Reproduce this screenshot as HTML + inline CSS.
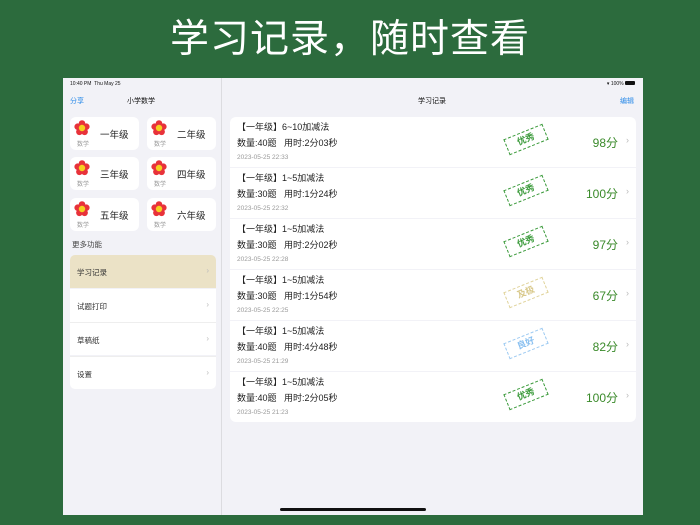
<!DOCTYPE html>
<html><head><meta charset="utf-8"><style>
*{margin:0;padding:0;box-sizing:border-box}
body{width:700px;height:525px;background:#2c6b3d;font-family:"Liberation Sans","Noto Sans CJK SC",sans-serif;position:relative;overflow:hidden}
.abs{position:absolute}
.title{left:0;width:700px;top:15px;text-align:center;color:#fff;font-size:39px;letter-spacing:1px;line-height:50px}
.screen{left:63px;top:78px;width:580px;height:437px;background:#f2f2f7}
.side{left:0;top:0;width:159px;height:437px;border-right:1px solid #dcdce0}
.g{background:#fff;border-radius:6px;width:69px;height:33px}
.g svg{position:absolute;left:4px;top:3px}
.g .n{left:30px;top:10px;font-size:9.5px;color:#222}
.g .s{left:7px;top:22px;font-size:6px;color:#999}
.menu{left:7px;width:146px;height:33px;background:#fff;font-size:7.5px;color:#333;padding:12px 0 0 7px}
.menu .ch{position:absolute;right:7px;top:11px;color:#bbb;font-size:8px}
.card{left:167px;width:406px;height:50px;background:#fff}
.card .l1{left:7px;top:3px;font-size:9px;color:#222}
.card .l2{left:7px;top:19px;font-size:9px;color:#222}
.card .l3{left:7px;top:37px;font-size:6.5px;color:#999}
.card .sc{right:18px;top:17px;font-size:12px;color:#3a8a2a}
.card .ch{right:7px;top:18px;font-size:9px;color:#bbb}
.stamp{left:275px;top:14px;width:42px;height:17px;border:1px dashed;transform:rotate(-22deg);font-size:9px;font-weight:bold;text-align:center;line-height:15px}
</style></head><body>
<svg width="0" height="0" style="position:absolute"><defs><g id="fl"><circle cx="8" cy="3.5" r="3.3" fill="#e8323a"/><circle cx="12.3" cy="6.7" r="3.3" fill="#e8323a"/><circle cx="10.6" cy="11.8" r="3.3" fill="#e8323a"/><circle cx="5.4" cy="11.8" r="3.3" fill="#e8323a"/><circle cx="3.7" cy="6.7" r="3.3" fill="#e8323a"/><circle cx="8" cy="8" r="3.2" fill="#f5d020"/></g></defs></svg>
<div class="abs title">学习记录，随时查看</div>
<div class="abs screen">
 <div class="abs side">
  <div class="abs" style="left:7px;top:3px;font-size:5px;color:#111">10:40 PM&nbsp;&nbsp;Thu May 25</div>
  <div class="abs" style="left:7px;top:18px;font-size:7px;color:#2a8ae8">分享</div>
  <div class="abs" style="left:64px;top:18px;font-size:7px;color:#111">小学数学</div>
  <div class="abs g" style="left:7px;top:39px"><svg width="16" height="16"><use href="#fl"/></svg><span class="abs n">一年级</span><span class="abs s">数学</span></div>
  <div class="abs g" style="left:84px;top:39px"><svg width="16" height="16"><use href="#fl"/></svg><span class="abs n">二年级</span><span class="abs s">数学</span></div>
  <div class="abs g" style="left:7px;top:79px"><svg width="16" height="16"><use href="#fl"/></svg><span class="abs n">三年级</span><span class="abs s">数学</span></div>
  <div class="abs g" style="left:84px;top:79px"><svg width="16" height="16"><use href="#fl"/></svg><span class="abs n">四年级</span><span class="abs s">数学</span></div>
  <div class="abs g" style="left:7px;top:120px"><svg width="16" height="16"><use href="#fl"/></svg><span class="abs n">五年级</span><span class="abs s">数学</span></div>
  <div class="abs g" style="left:84px;top:120px"><svg width="16" height="16"><use href="#fl"/></svg><span class="abs n">六年级</span><span class="abs s">数学</span></div>
  <div class="abs" style="left:9px;top:161px;font-size:7.5px;color:#444">更多功能</div>
  <div class="abs menu" style="top:177px;background:#ebe2c6;border-radius:5px 5px 0 0">学习记录<span class="ch">›</span></div>
  <div class="abs menu" style="top:211px">试题打印<span class="ch">›</span></div>
  <div class="abs menu" style="top:244px;border-top:1px solid #eee">草稿纸<span class="ch">›</span></div>
  <div class="abs menu" style="top:278px;border-top:1px solid #eee;border-radius:0 0 5px 5px">设置<span class="ch">›</span></div>
 </div>
 <div class="abs" style="right:8px;top:3px;font-size:5px;color:#111">▾ 100% <span style="display:inline-block;width:10px;height:4px;background:#111;border-radius:1px"></span></div>
 <div class="abs" style="left:355px;top:18px;font-size:7px;color:#111">学习记录</div>
 <div class="abs" style="left:557px;top:18px;font-size:7px;color:#2a8ae8">编辑</div>

 <div class="abs card" style="top:39px;border-radius:6px 6px 0 0"><span class="abs l1">【一年级】6~10加减法</span><span class="abs l2">数量:40题&nbsp;&nbsp;&nbsp;用时:2分03秒</span><span class="abs l3">2023-05-25 22:33</span><div class="abs stamp" style="color:#3a9a3a;border-color:#3a9a3a">优秀</div><span class="abs sc">98分</span><span class="abs ch">›</span></div>
 <div class="abs card" style="top:90px"><span class="abs l1">【一年级】1~5加减法</span><span class="abs l2">数量:30题&nbsp;&nbsp;&nbsp;用时:1分24秒</span><span class="abs l3">2023-05-25 22:32</span><div class="abs stamp" style="color:#3a9a3a;border-color:#3a9a3a">优秀</div><span class="abs sc">100分</span><span class="abs ch">›</span></div>
 <div class="abs card" style="top:141px"><span class="abs l1">【一年级】1~5加减法</span><span class="abs l2">数量:30题&nbsp;&nbsp;&nbsp;用时:2分02秒</span><span class="abs l3">2023-05-25 22:28</span><div class="abs stamp" style="color:#3a9a3a;border-color:#3a9a3a">优秀</div><span class="abs sc">97分</span><span class="abs ch">›</span></div>
 <div class="abs card" style="top:192px"><span class="abs l1">【一年级】1~5加减法</span><span class="abs l2">数量:30题&nbsp;&nbsp;&nbsp;用时:1分54秒</span><span class="abs l3">2023-05-25 22:25</span><div class="abs stamp" style="color:#d8c88a;border-color:#e0d39a">及极</div><span class="abs sc">67分</span><span class="abs ch">›</span></div>
 <div class="abs card" style="top:243px"><span class="abs l1">【一年级】1~5加减法</span><span class="abs l2">数量:40题&nbsp;&nbsp;&nbsp;用时:4分48秒</span><span class="abs l3">2023-05-25 21:29</span><div class="abs stamp" style="color:#8ac0f0;border-color:#9ccaf2">良好</div><span class="abs sc">82分</span><span class="abs ch">›</span></div>
 <div class="abs card" style="top:294px;border-radius:0 0 6px 6px"><span class="abs l1">【一年级】1~5加减法</span><span class="abs l2">数量:40题&nbsp;&nbsp;&nbsp;用时:2分05秒</span><span class="abs l3">2023-05-25 21:23</span><div class="abs stamp" style="color:#3a9a3a;border-color:#3a9a3a">优秀</div><span class="abs sc">100分</span><span class="abs ch">›</span></div>
 <div class="abs" style="left:217px;top:430px;width:146px;height:3px;background:#111;border-radius:2px"></div>
</div>
</body></html>
